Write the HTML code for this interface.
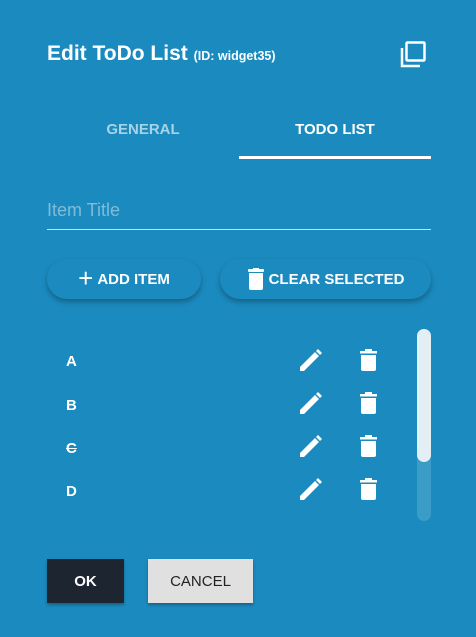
<!DOCTYPE html>
<html><head><style>
body{margin:0;width:476px;height:637px;background:#1b8bbf;font-family:"Liberation Sans",sans-serif;color:#fff;position:relative;overflow:hidden}
.a{position:absolute}
.btn{position:absolute;height:40px;border-radius:20px;background:#1b8bbf;box-shadow:0 3px 6px rgba(0,0,0,.3);font-weight:bold;font-size:15px;display:flex;align-items:center;justify-content:center;gap:4px}
.row{position:absolute;left:66px;font-size:15px;font-weight:bold}
</style></head><body>
<div class="a" style="left:47px;top:42px;font-size:21px;font-weight:bold">Edit ToDo List <span style="font-size:12.5px">(ID: widget35)</span></div>
<svg class="a" style="left:398px;top:40px" width="30" height="30" viewBox="0 0 30 30"><path d="M4 8v18h18" fill="none" stroke="#fff" stroke-width="2.5"/><rect x="8.5" y="2.5" width="18" height="18" rx="1" fill="none" stroke="#fff" stroke-width="2.5"/></svg>
<div class="a" style="left:47px;width:192px;top:121px;text-align:center;font-size:15px;font-weight:bold;color:#a7d3e6">GENERAL</div>
<div class="a" style="left:239px;width:192px;top:121px;text-align:center;font-size:15px;font-weight:bold">TODO LIST</div>
<div class="a" style="left:239px;width:192px;top:156px;height:3px;background:#fff"></div>
<div class="a" style="left:47px;top:200px;font-size:18px;color:#7fbcd8">Item Title</div>
<div class="a" style="left:47px;top:229px;width:384px;height:1px;background:#c8e0ec"></div>
<div class="btn" style="left:47px;top:259px;width:154px"><span style="font-size:26px;font-weight:normal;line-height:20px;margin-top:-3px">+</span>ADD ITEM</div>
<div class="btn" style="left:220px;top:259px;width:211px"><svg width="18" height="22" viewBox="0 0 18 22"><rect x="1" y="1" width="16" height="3" rx="1" fill="#fff"/><rect x="6" y="0" width="6" height="2" fill="#fff"/><path d="M2 5h14v15a2 2 0 0 1-2 2H4a2 2 0 0 1-2-2z" fill="#fff"/></svg>CLEAR SELECTED</div>
<div class="row" style="top:353px">A</div>
<div class="row" style="top:397px">B</div>
<div class="row" style="top:440px;text-decoration:line-through">C</div>
<div class="row" style="top:483px">D</div>
<svg class="a" style="left:0;top:0" width="476" height="637">
<defs><g id="p"><path d="M0 22v-4L15 3l4 4L4 22z M16 2l2-2 4 4-2 2z" fill="#fff"/></g>
<g id="t"><rect x="0" y="2" width="17" height="2.5" fill="#fff"/><rect x="5" y="0" width="7" height="2" fill="#fff"/><path d="M1 6h15v14a2 2 0 0 1-2 2H3a2 2 0 0 1-2-2z" fill="#fff"/></g></defs>
<use href="#p" x="300" y="349"/><use href="#t" x="360" y="349"/>
<use href="#p" x="300" y="392"/><use href="#t" x="360" y="392"/>
<use href="#p" x="300" y="435"/><use href="#t" x="360" y="435"/>
<use href="#p" x="300" y="478"/><use href="#t" x="360" y="478"/>
<rect x="417" y="329" width="14" height="192" rx="7" fill="#fff" fill-opacity=".15"/>
<rect x="417" y="329" width="14" height="133" rx="7" fill="#e4eff5"/>
</svg>
<div class="a" style="left:47px;top:559px;width:77px;height:44px;background:#1c2530;box-shadow:0 2px 3px rgba(0,0,0,.3);font-weight:bold;font-size:15px;display:flex;align-items:center;justify-content:center">OK</div>
<div class="a" style="left:148px;top:559px;width:105px;height:44px;background:#e0e0e0;color:#222;box-shadow:0 2px 3px rgba(0,0,0,.3);font-size:15px;display:flex;align-items:center;justify-content:center">CANCEL</div>
</body></html>
